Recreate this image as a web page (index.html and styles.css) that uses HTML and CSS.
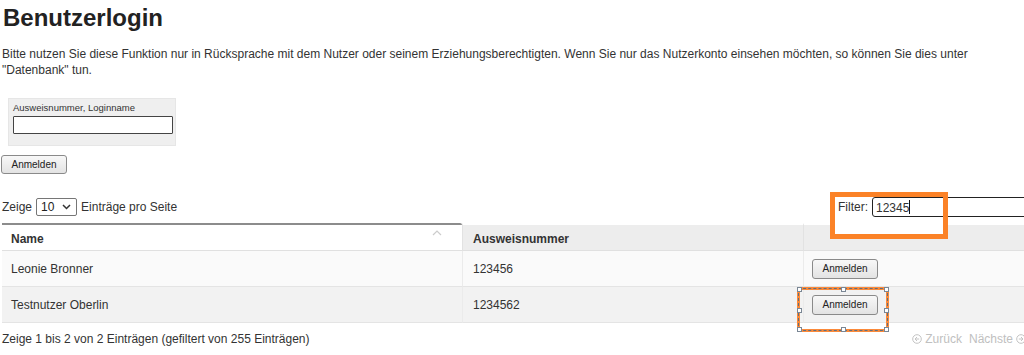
FILE: index.html
```html
<!DOCTYPE html>
<html lang="de">
  <head>
    <meta charset="UTF-8" />
    <meta name="viewport" content="width=device-width, initial-scale=1.0" />
    <title>Benutzerlogin</title>

    <link rel="stylesheet" href="styles.css">
  </head>
  <body>
    <div class="page">
      <h1>Benutzerlogin</h1>
      <p class="intro">
        Bitte nutzen Sie diese Funktion nur in Rücksprache mit dem Nutzer oder seinem Erziehungsberechtigten. Wenn Sie nur das Nutzerkonto einsehen möchten, so können Sie dies unter<br />"Datenbank" tun.
      </p>

      <form class="login" onsubmit="return false">
        <div class="login-box">
          <label for="login-id">Ausweisnummer, Loginname</label>
          <input type="text" id="login-id" />
        </div>
        <button class="btn">Anmelden</button>
      </form>

      <div class="dt">
        <div class="dt-top">
          <label class="dt-length">Zeige
            <span class="select">
              <select>
                <option>10</option>
                <option>25</option>
                <option>50</option>
                <option>100</option>
              </select>
              <svg class="chev" width="9" height="6" viewBox="0 0 9 6"><path d="M1 1l3.5 3.5L8 1" fill="none" stroke="#333" stroke-width="1.5"/></svg>
            </span>
            Einträge pro Seite</label>
          <label class="dt-filter">Filter: <span class="filter-input">12345<i class="caret"></i></span></label>
        </div>

        <table>
          <thead>
            <tr>
              <th class="sorted">Name
                <svg class="sort" width="10" height="6" viewBox="0 0 10 6"><path d="M1 5l4-4 4 4" fill="none" stroke="#ccc" stroke-width="1.2"/></svg>
              </th>
              <th>Ausweisnummer</th>
              <th></th>
            </tr>
          </thead>
          <tbody>
            <tr class="odd">
              <td>Leonie Bronner</td>
              <td>123456</td>
              <td><button class="btn btn-row">Anmelden</button></td>
            </tr>
            <tr class="even">
              <td>Testnutzer Oberlin</td>
              <td>1234562</td>
              <td><button class="btn btn-row">Anmelden</button></td>
            </tr>
          </tbody>
        </table>

        <div class="dt-bottom">
          <div class="dt-info">Zeige 1 bis 2 von 2 Einträgen (gefiltert von 255 Einträgen)</div>
          <div class="dt-paginate">
            <span class="pg">
              <svg width="10" height="10" viewBox="0 0 10 10"><circle cx="5" cy="5" r="4.3" fill="none" stroke="#c4c4c4"/><path d="M3 5h4.2M5 3L3 5l2 2" fill="none" stroke="#c4c4c4"/></svg>
              Zurück</span>
            <span class="pg">Nächste
              <svg width="10" height="10" viewBox="0 0 10 10"><circle cx="5" cy="5" r="4.3" fill="none" stroke="#c4c4c4"/><path d="M2.8 5H7M5 3l2 2-2 2" fill="none" stroke="#c4c4c4"/></svg>
            </span>
          </div>
        </div>
      </div>

      <!-- Markierungen aus dem Screenshot -->
      <div class="mark-fill"></div>
      <div class="mark"></div>
      <div class="mark-sel">
        <i class="h h-tl"></i><i class="h h-tm"></i><i class="h h-tr"></i>
        <i class="h h-ml"></i><i class="h h-mr"></i>
        <i class="h h-bl"></i><i class="h h-bm"></i><i class="h h-br"></i>
      </div>
    </div>
  </body>
</html>
```

FILE: styles.css
```css
body {
  margin: 0;
  font-family: "Liberation Sans", Arial, sans-serif;
  font-size: 12px;
  color: #333;
  background: #fff;
  overflow: hidden;
}

.page {
  position: relative;
  width: 1060px;
  padding-left: 2px;
}

h1 {
  margin: 4px 0 0 1px;
  font-size: 24px;
  line-height: 28px;
  color: #222;
}

.intro {
  margin: 14px 0 0;
  line-height: 16px;
}

.login-box {
  margin: 20px 0 0 6px;
  width: 160px;
  padding: 3px 2px 11px 4px;
  background: #efefef;
  border: 1px solid #e6e6e6;
}

.login-box label {
  display: block;
  font-size: 9.5px;
  line-height: 12px;
}

.login-box input {
  display: block;
  box-sizing: border-box;
  width: 160px;
  height: 18px;
  margin-top: 2px;
  border: 1px solid #444;
  border-radius: 1px;
  background: #fff;
}

.btn {
  box-sizing: border-box;
  width: 66px;
  height: 19px;
  padding: 0;
  font-family: inherit;
  font-size: 10px;
  color: #222;
  background: linear-gradient(#f8f8f8, #e3e3e3);
  border: 1px solid #8a8a8a;
  border-radius: 3px;
}

.login .btn {
  margin: 9px 0 0 -1px;
  display: block;
}

.dt {
  margin-top: 22px;
}

.dt-top {
  display: flex;
  align-items: center;
  height: 22px;
}

.dt-length {
  display: flex;
  align-items: center;
  gap: 4px;
}

.select {
  position: relative;
  display: inline-block;
}

.select select {
  appearance: none;
  box-sizing: border-box;
  width: 41px;
  height: 18px;
  padding: 0 0 0 4px;
  font-family: inherit;
  font-size: 12px;
  color: #222;
  background: #fff;
  border: 1px solid #767676;
  border-radius: 2px;
}

.chev {
  position: absolute;
  right: 6px;
  top: 6px;
  pointer-events: none;
}

.dt-filter {
  position: relative;
  z-index: 2;
  margin-left: auto;
  display: flex;
  align-items: center;
  gap: 4px;
}

.filter-input {
  box-sizing: border-box;
  width: 190px;
  height: 20px;
  padding: 2px 3px;
  font-size: 12px;
  line-height: 15px;
  color: #333;
  border: 1px solid #222;
  border-radius: 3px 0 0 3px;
  background: #fff;
}

.caret {
  display: inline-block;
  width: 1px;
  height: 14px;
  background: #111;
  vertical-align: -2px;
}

table {
  width: 100%;
  margin-top: 5px;
  border-collapse: separate;
  border-spacing: 0;
}

th {
  position: relative;
  box-sizing: border-box;
  height: 28px;
  padding: 2px 10px 0;
  text-align: left;
  font-weight: bold;
  background: #ededed;
  border-top: 2px solid #fff;
  border-bottom: 1px solid #e0e0e0;
  border-left: 1px solid #e2e2e2;
}

th.sorted {
  background: #fff;
  border-top-color: #8c8c8c;
  border-left: 0;
  border-top-right-radius: 2px;
  padding-left: 9px;
}

.sort {
  position: absolute;
  right: 20px;
  top: 5px;
}

td {
  box-sizing: border-box;
  height: 36px;
  padding: 0 10px;
  border-bottom: 1px solid #e4e4e4;
  border-left: 1px solid #ebebeb;
}

td:first-child {
  border-left: 0;
  padding-left: 9px;
}

th:nth-child(1), td:nth-child(1) {
  width: 460px;
}

th:nth-child(2), td:nth-child(2) {
  width: 341px;
}

tr.odd td {
  background: #fafafa;
}

tr.even td {
  background: #f2f2f2;
}

td .btn-row {
  display: block;
  margin-left: -2px;
  height: 20px;
}

.dt-bottom {
  display: flex;
  justify-content: space-between;
  align-items: center;
  margin-top: 8px;
  line-height: 16px;
}

.dt-paginate {
  display: flex;
  gap: 7px;
  margin-right: 36px;
  color: #c0c0c0;
}

.pg {
  display: flex;
  align-items: center;
  gap: 3px;
}

/* orange Markierungen */
.mark-fill {
  position: absolute;
  z-index: 1;
  left: 830px;
  top: 188px;
  width: 117px;
  height: 47px;
  background: #fff;
}

.mark {
  position: absolute;
  z-index: 3;
  left: 830px;
  top: 188px;
  box-sizing: border-box;
  width: 118px;
  height: 47px;
  border: 5px solid #fb8227;
}

.mark-sel {
  position: absolute;
  z-index: 3;
  left: 797px;
  top: 283px;
  box-sizing: border-box;
  width: 92px;
  height: 45px;
  border: 3px solid #fb8a3a;
  outline: 1px dashed #5f6f80;
  outline-offset: -2px;
}

.h {
  position: absolute;
  width: 3px;
  height: 3px;
  background: #fff;
  border: 1px solid #7a8795;
}

.h-tl { left: -3px; top: -3px; }
.h-tm { left: 41px; top: -3px; }
.h-tr { right: -3px; top: -3px; }
.h-ml { left: -3px; top: 18px; }
.h-mr { right: -3px; top: 18px; }
.h-bl { left: -3px; bottom: -3px; }
.h-bm { left: 41px; bottom: -3px; }
.h-br { right: -3px; bottom: -3px; }
```
